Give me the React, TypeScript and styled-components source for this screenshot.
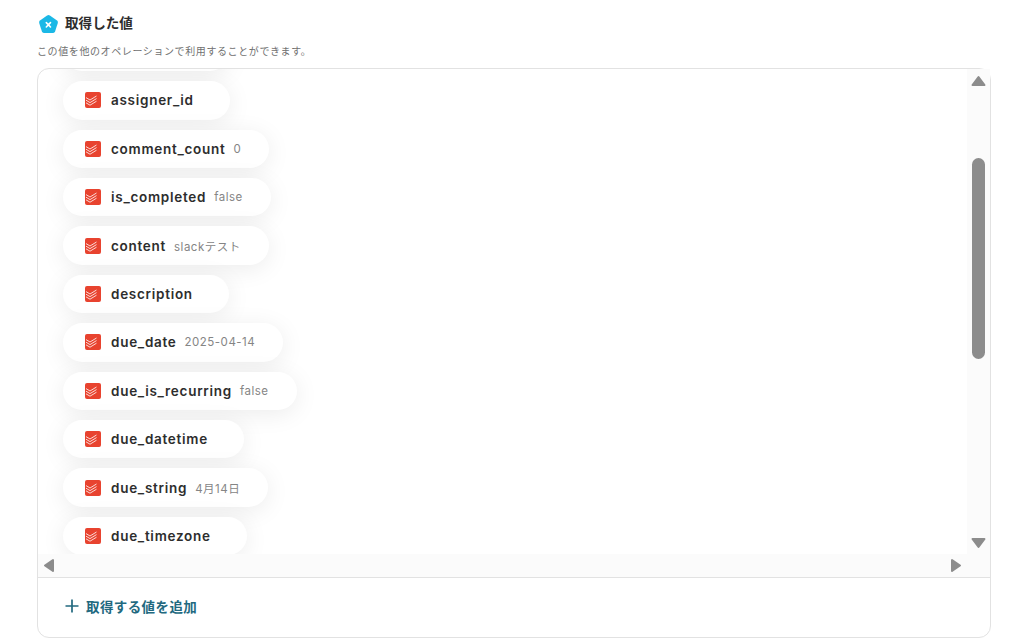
import React from "react";
import styled, { createGlobalStyle } from "styled-components";

const GlobalStyle = createGlobalStyle`
  html, body {
    margin: 0;
    background: #fff;
    overflow: hidden;
    font-family: Inter, "Noto Sans CJK JP", sans-serif;
  }
`;

const Page = styled.div`
  width: 1018px;
  height: 640px;
  box-sizing: border-box;
  padding: 12px 27px 2px 37px;
  display: flex;
  flex-direction: column;
`;

const TitleRow = styled.div`
  display: flex;
  align-items: center;
  gap: 6px;
  height: 22px;
  padding-left: 1px;
`;

const Title = styled.div`
  margin-top: -2px;
  font-size: 13.6px;
  font-weight: 700;
  color: #2d2d2d;
`;

const Description = styled.p`
  margin: 8px 0 0;
  font-size: 10px;
  line-height: 18px;
  letter-spacing: 0.6px;
  color: #707070;
`;

const Panel = styled.div`
  margin-top: 8px;
  flex: 1;
  display: flex;
  flex-direction: column;
  border: 1px solid #e2e2e2;
  border-radius: 12px;
`;

const ScrollArea = styled.div`
  height: 508px;
  display: grid;
  grid-template-columns: 1fr 23px;
  grid-template-rows: 485px 23px;
  border-bottom: 1px solid #e2e2e2;
`;

const ListClip = styled.div`
  overflow: hidden;
  padding-left: 25px;
  border-top-left-radius: 11px;
`;

const List = styled.div`
  margin-top: -36.2px;
  display: flex;
  flex-direction: column;
  align-items: flex-start;
  gap: 10px;
`;

const Pill = styled.div`
  height: 38.4px;
  box-sizing: border-box;
  display: flex;
  align-items: center;
  padding: 0 28px 0 22px;
  border-radius: 20px;
  background: #fff;
  box-shadow: 0 4px 24px rgba(0, 0, 0, 0.08);
  flex-shrink: 0;
`;

// the row scrolled out of view, only its bottom edge shows
const PeekPill = styled(Pill)`
  width: 166px;
`;

const Name = styled.span`
  margin: 0 8px 0 10px;
  font-size: 13.5px;
  font-weight: 600;
  letter-spacing: 0.72px;
  color: #2d2d2d;
`;

const Value = styled.span`
  font-size: 11.5px;
  letter-spacing: 0.5px;
  color: #858585;
`;

const VerticalTrack = styled.div`
  background: #fbfbfb;
  display: flex;
  flex-direction: column;
  align-items: center;
  padding: 6px 0 5px;
  box-sizing: border-box;
`;

const Thumb = styled.div`
  width: 13px;
  height: 201px;
  margin-top: 71px;
  margin-bottom: auto;
  border-radius: 7px;
  background: #8c8c8c;
`;

const HorizontalTrack = styled.div`
  background: #fbfbfb;
  grid-column: 1 / 3;
  display: flex;
  align-items: center;
  justify-content: space-between;
  padding: 0 28px 0 5px;
`;

const AddRow = styled.div`
  flex: 1;
  display: flex;
  align-items: center;
  gap: 7px;
  padding: 0 0 4px 27px;
`;

const AddLabel = styled.span`
  font-size: 13.5px;
  font-weight: 700;
  letter-spacing: 0.4px;
  color: #22697f;
`;

const Arrow = ({ dir }: { dir: "up" | "down" | "left" | "right" }) => {
  const paths = {
    up: "M7.5 2 L13.5 10 H1.5 Z",
    down: "M7.5 10 L13.5 2 H1.5 Z",
    left: "M2 7.5 L10 2 V13 Z",
    right: "M10 7.5 L2 2 V13 Z",
  };
  const vertical = dir === "up" || dir === "down";
  return (
    <svg
      width={vertical ? 15 : 12}
      height={vertical ? 12 : 15}
      viewBox={vertical ? "0 0 15 12" : "0 0 12 15"}
    >
      <path
        d={paths[dir]}
        fill="#8c8c8c"
        stroke="#8c8c8c"
        strokeWidth="2"
        strokeLinejoin="round"
      />
    </svg>
  );
};

const TodoistIcon = () => (
  <svg width="16" height="16" viewBox="0 0 16 16">
    <rect width="16" height="16" rx="2" fill="#e8432f" />
    <path
      d="M1 5.6 L5 8 L11.5 4 M1 8.2 L5 10.6 L11.5 6.6 M1 10.8 L5 13.2 L11.5 9.2"
      fill="none"
      stroke="#fff"
      strokeWidth="1"
      opacity="0.8"
    />
  </svg>
);

const VariableIcon = () => (
  <svg width="21" height="21" viewBox="0 0 21 21">
    <path
      d="M9.1 1.4 Q10.5 .5 11.9 1.4 L19 6.6 Q20.2 7.5 19.8 9 L17.1 17.6 Q16.6 19 15.1 19 L5.9 19 Q4.4 19 3.9 17.6 L1.2 9 Q.8 7.5 2 6.6 Z"
      fill="#1bb8e6"
      transform="translate(0 1)"
    />
    <path
      d="M8.3 9.6 L12.5 14 M12.5 9.6 L8.3 14"
      stroke="#fff"
      strokeWidth="1.6"
      strokeLinecap="round"
    />
  </svg>
);

const PlusIcon = () => (
  <svg width="14" height="14" viewBox="0 0 14 14">
    <path d="M7 .5 V13.5 M.5 7 H13.5" stroke="#22697f" strokeWidth="1.7" />
  </svg>
);

const items: { name: string; value?: string }[] = [
  { name: "assigner_id" },
  { name: "comment_count", value: "0" },
  { name: "is_completed", value: "false" },
  { name: "content", value: "slackテスト" },
  { name: "description" },
  { name: "due_date", value: "2025-04-14" },
  { name: "due_is_recurring", value: "false" },
  { name: "due_datetime" },
  { name: "due_string", value: "4月14日" },
  { name: "due_timezone" },
];

const App = () => {
  return (
    <>
      <GlobalStyle />
      <Page>
        <TitleRow>
          <VariableIcon />
          <Title>取得した値</Title>
        </TitleRow>
        <Description>この値を他のオペレーションで利用することができます。</Description>
        <Panel>
          <ScrollArea>
            <ListClip>
              <List>
                <PeekPill />
                {items.map((item) => (
                  <Pill key={item.name}>
                    <TodoistIcon />
                    <Name>{item.name}</Name>
                    {item.value && <Value>{item.value}</Value>}
                  </Pill>
                ))}
              </List>
            </ListClip>
            <VerticalTrack>
              <Arrow dir="up" />
              <Thumb />
              <Arrow dir="down" />
            </VerticalTrack>
            <HorizontalTrack>
              <Arrow dir="left" />
              <Arrow dir="right" />
            </HorizontalTrack>
          </ScrollArea>
          <AddRow>
            <PlusIcon />
            <AddLabel>取得する値を追加</AddLabel>
          </AddRow>
        </Panel>
      </Page>
    </>
  );
};

export default App;
